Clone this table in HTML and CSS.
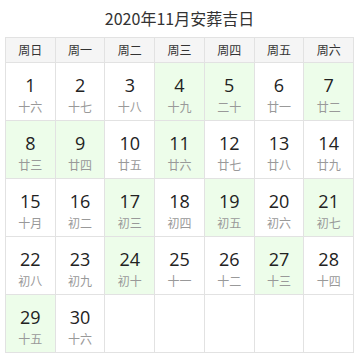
FILE: index.html
```html
<!DOCTYPE html>
<html lang="zh-CN">
<head>
<meta charset="utf-8">
<title>2020年11月安葬吉日</title>
<link rel="stylesheet" href="styles.css">
</head>
<body>
<div class="wrap">
  <h1 class="title">2020年11月安葬吉日</h1>
  <div class="cal">
    <div class="hd">周日</div><div class="hd">周一</div><div class="hd">周二</div><div class="hd">周三</div><div class="hd">周四</div><div class="hd">周五</div><div class="hd">周六</div>

    <div class="day"><span class="n">1</span><span class="l">十六</span></div>
    <div class="day"><span class="n">2</span><span class="l">十七</span></div>
    <div class="day"><span class="n">3</span><span class="l">十八</span></div>
    <div class="day good"><span class="n">4</span><span class="l">十九</span></div>
    <div class="day good"><span class="n">5</span><span class="l">二十</span></div>
    <div class="day"><span class="n">6</span><span class="l">廿一</span></div>
    <div class="day good"><span class="n">7</span><span class="l">廿二</span></div>

    <div class="day good"><span class="n">8</span><span class="l">廿三</span></div>
    <div class="day good"><span class="n">9</span><span class="l">廿四</span></div>
    <div class="day"><span class="n">10</span><span class="l">廿五</span></div>
    <div class="day good"><span class="n">11</span><span class="l">廿六</span></div>
    <div class="day"><span class="n">12</span><span class="l">廿七</span></div>
    <div class="day"><span class="n">13</span><span class="l">廿八</span></div>
    <div class="day"><span class="n">14</span><span class="l">廿九</span></div>

    <div class="day"><span class="n">15</span><span class="l">十月</span></div>
    <div class="day"><span class="n">16</span><span class="l">初二</span></div>
    <div class="day good"><span class="n">17</span><span class="l">初三</span></div>
    <div class="day"><span class="n">18</span><span class="l">初四</span></div>
    <div class="day good"><span class="n">19</span><span class="l">初五</span></div>
    <div class="day"><span class="n">20</span><span class="l">初六</span></div>
    <div class="day good"><span class="n">21</span><span class="l">初七</span></div>

    <div class="day"><span class="n">22</span><span class="l">初八</span></div>
    <div class="day"><span class="n">23</span><span class="l">初九</span></div>
    <div class="day good"><span class="n">24</span><span class="l">初十</span></div>
    <div class="day"><span class="n">25</span><span class="l">十一</span></div>
    <div class="day"><span class="n">26</span><span class="l">十二</span></div>
    <div class="day good"><span class="n">27</span><span class="l">十三</span></div>
    <div class="day"><span class="n">28</span><span class="l">十四</span></div>

    <div class="day good"><span class="n">29</span><span class="l">十五</span></div>
    <div class="day"><span class="n">30</span><span class="l">十六</span></div>
    <div class="day"></div>
    <div class="day"></div>
    <div class="day"></div>
    <div class="day"></div>
    <div class="day"></div>
  </div>
</div>
</body>
</html>
```
FILE: styles.css
```css
html, body {
  margin: 0;
  padding: 0;
  background: #fff;
}
body {
  font-family: "Noto Sans CJK SC", "Noto Sans", sans-serif;
  color: #333;
}
.wrap {
  padding: 0 5px;
}
.title {
  margin: 0;
  height: 37px;
  line-height: 36px;
  font-size: 16px;
  font-weight: normal;
  text-align: center;
  color: #333;
}
.cal {
  display: grid;
  grid-template-columns: repeat(7, 1fr);
  grid-template-rows: 25px repeat(5, 58px);
  border-top: 1px solid #e2e2e2;
  border-left: 1px solid #e2e2e2;
  width: 349px;
  box-sizing: border-box;
}
.hd, .day {
  border-right: 1px solid #e2e2e2;
  border-bottom: 1px solid #e2e2e2;
}
.hd {
  background: #f5f5f5;
  font-size: 12px;
  line-height: 24px;
  text-align: center;
  color: #333;
}
.day {
  display: flex;
  flex-direction: column;
  align-items: center;
  padding-top: 10px;
}
.day.good {
  background: #edfdea;
}
.n {
  font-family: "Open Sans", "Noto Sans", sans-serif;
  font-size: 18px;
  line-height: 24px;
  color: #222;
}
.l {
  font-size: 12px;
  line-height: 20px;
  color: #999;
}
```
